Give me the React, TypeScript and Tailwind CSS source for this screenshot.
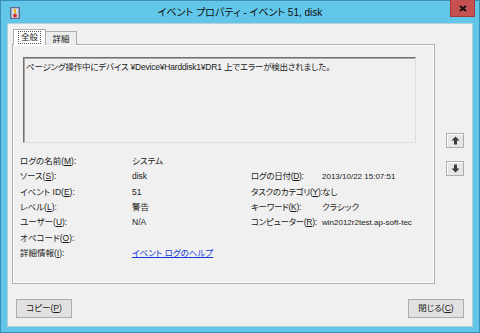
import React from "react";

const L = ({ children }: { children: React.ReactNode }) => (
  <span className="text-[8px]">{children}</span>
);

const Arrow = ({ up }: { up: boolean }) => (
  <div className="w-[18px] h-[15px] border border-[#adadad] bg-[#e6e6e6] shadow-[inset_1px_1px_0_#fff] flex items-center justify-center">
    <svg width="9" height="9" viewBox="0 0 9 9" style={{ transform: up ? "none" : "rotate(180deg)" }}>
      <path d="M4.5 0.5 L8.5 4.5 L6 4.5 L6 8.5 L3 8.5 L3 4.5 L0.5 4.5 Z" fill="#3a3a3a" />
    </svg>
  </div>
);

const Row = ({ label, value, rl, rv }: { label: React.ReactNode; value?: React.ReactNode; rl?: React.ReactNode; rv?: React.ReactNode }) => (
  <>
    <div className="h-[15.33px] leading-[15.33px] whitespace-nowrap">{label}</div>
    <div className="h-[15.33px] leading-[15.33px] whitespace-nowrap">{value}</div>
    <div className="h-[15.33px] leading-[15.33px] whitespace-nowrap tracking-[-0.3px]">{rl}</div>
    <div className="h-[15.33px] leading-[15.33px] whitespace-nowrap">{rv}</div>
  </>
);

export default function App() {
  return (
    <div
      className="w-[480px] h-[333px] bg-[#62c6e8] border border-[#3a8db5] flex flex-col text-[#1a1a1a]"
      style={{ fontFamily: '"Liberation Sans", "Noto Sans CJK JP", sans-serif', fontFeatureSettings: '"palt"' }}
    >
      {/* Title bar */}
      <div className="relative h-[22px] flex items-center shrink-0">
        <div className="ml-[9px] mt-[1px]">
          <svg width="10" height="12" viewBox="0 0 10 12">
            <rect x="0.5" y="0.5" width="9" height="11" fill="#9aa6c4" stroke="#5d6b8e" />
            <rect x="2" y="1.5" width="6" height="9" fill="#d8dcea" />
            <rect x="4" y="2" width="2" height="4" fill="#e8b800" />
            <circle cx="5" cy="8.5" r="2" fill="#d83030" />
          </svg>
        </div>
        <div className="absolute inset-0 flex items-center justify-center text-[10px] text-[#111] pt-[1px]">
          <span>
            イベント プロパティ - イベント 51, disk
          </span>
        </div>
        <div className="absolute right-[4px] -top-[1px] w-[25px] h-[17px] bg-[#c75050] border border-[#a43c3c] border-t-0 flex items-center justify-center">
          <svg width="8" height="7" viewBox="0 0 8 7">
            <path d="M1 1 L7 6 M7 1 L1 6" stroke="#111" strokeWidth="1.8" />
          </svg>
        </div>
      </div>

      {/* Client */}
      <div className="mx-[6px] mb-[5px] flex-1 bg-[#f0f0f0] border border-[#b5cfdb] flex flex-col text-[8.5px]">
        <div className="flex items-start pl-[4px] pt-[5px]">
          <div className="flex flex-col w-[423px]">
            {/* Tabs */}
            <div className="flex items-end h-[16px] pl-[1px] relative z-10 -mb-[1px]">
              <div className="w-[33px] h-[16px] bg-white border border-b-0 border-[#adadad] flex items-center justify-center">
                <span className="border border-dotted border-[#555] px-[2px] leading-[11px]">全般</span>
              </div>
              <div className="w-[31px] h-[14px] bg-[#ececec] border border-b-0 border-l-0 border-[#adadad] flex items-center justify-center leading-[12px]">
                詳細
              </div>
            </div>
            {/* Panel */}
            <div className="h-[240px] border border-[#adadad] shadow-[inset_1px_1px_0_#fff,inset_-1px_-1px_0_#fff] flex flex-col">
              <div className="ml-[10px] mt-[12px] w-[393px] h-[86px] border border-t-[#707070] border-l-[#707070] border-r-[#dedede] border-b-[#dedede] shadow-[inset_1px_1px_0_#a8a8a8] px-[2px] pt-[2px] leading-[14px] whitespace-nowrap tracking-[-0.2px]">
                ページング操作中にデバイス ¥Device¥Harddisk1¥DR1 上でエラーが検出されました。
              </div>
              <div className="mt-[11px] ml-[7px] grid grid-cols-[112px_119px_71px_1fr]">
                <Row label={<>ログの名前(<u>M</u>):</>} value="システム" />
                <Row label={<>ソース(<u>S</u>):</>} value="disk" rl={<>ログの日付(<u>D</u>):</>} rv={<L>2013/10/22 15:07:51</L>} />
                <Row label={<>イベント ID(<u>E</u>):</>} value="51" rl={<>タスクのカテゴリ(<u>Y</u>):</>} rv="なし" />
                <Row label={<>レベル(<u>L</u>):</>} value="警告" rl={<>キーワード(<u>K</u>):</>} rv="クラシック" />
                <Row label={<>ユーザー(<u>U</u>):</>} value="N/A" rl={<>コンピューター(<u>R</u>):</>} rv={<L>win2012r2test.ap-soft-tec</L>} />
                <Row label={<>オペコード(<u>O</u>):</>} />
                <Row label={<>詳細情報(<u>I</u>):</>} value={<span className="text-[#1537d6] underline">イベント ログのヘルプ</span>} />
              </div>
            </div>
          </div>
          <div className="ml-[11px] pt-[104px] flex flex-col gap-[13px]">
            <Arrow up />
            <Arrow up={false} />
          </div>
        </div>
        <div className="mt-[15px] px-[8px] flex justify-between">
          <div className="w-[56px] h-[19px] border border-[#adadad] bg-[#e1e1e1] flex items-center justify-center">
            コピー(<u>P</u>)
          </div>
          <div className="w-[56px] h-[19px] border border-[#adadad] bg-[#e1e1e1] flex items-center justify-center">
            閉じる(<u>C</u>)
          </div>
        </div>
      </div>
    </div>
  );
}
